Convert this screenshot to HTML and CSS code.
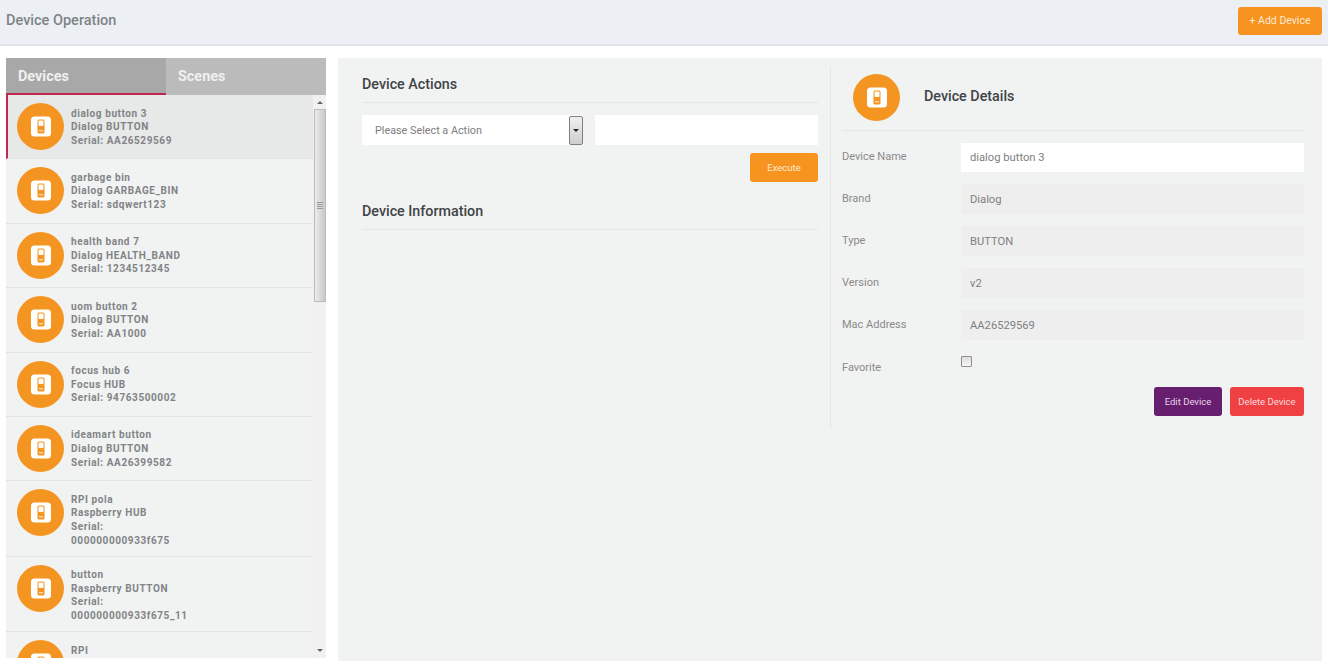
FILE: index.html
```html
<!DOCTYPE html>
<html lang="en">
<head>
    <meta charset="UTF-8">
    <title>Device Operation</title>
    <link rel="stylesheet" href="styles.css">
</head>
<body>
    <svg class="icon-defs" width="0" height="0">
        <symbol id="device-icon" viewBox="0 0 47 47">
            <circle cx="23.5" cy="23.5" r="23.5" fill="#f49521"/>
            <rect x="14" y="13.5" width="20" height="20" rx="3.5" fill="#fff"/>
            <rect x="20.5" y="16.5" width="7" height="14" rx="1.5" fill="#f49521"/>
            <rect x="21.5" y="17.6" width="5" height="5.4" rx="1" fill="#fff"/>
            <rect x="22" y="27" width="4" height="1.4" fill="#fbd9ae"/>
        </symbol>
    </svg>

    <header class="topbar">
        <h1>Device Operation</h1>
        <button class="btn btn-orange btn-add">+ Add Device</button>
    </header>

    <div class="page">
        <aside class="sidebar">
            <div class="tabs">
                <div class="tab tab-active">Devices</div>
                <div class="tab">Scenes</div>
            </div>
            <div class="list-wrap">
                <ul class="device-list">
                    <li class="device device-selected">
                        <svg class="device-icon"><use href="#device-icon"/></svg>
                        <div class="device-text">dialog button 3<br>Dialog BUTTON<br>Serial: AA26529569</div>
                    </li>
                    <li class="device">
                        <svg class="device-icon"><use href="#device-icon"/></svg>
                        <div class="device-text">garbage bin<br>Dialog GARBAGE_BIN<br>Serial: sdqwert123</div>
                    </li>
                    <li class="device">
                        <svg class="device-icon"><use href="#device-icon"/></svg>
                        <div class="device-text">health band 7<br>Dialog HEALTH_BAND<br>Serial: 1234512345</div>
                    </li>
                    <li class="device">
                        <svg class="device-icon"><use href="#device-icon"/></svg>
                        <div class="device-text">uom button 2<br>Dialog BUTTON<br>Serial: AA1000</div>
                    </li>
                    <li class="device">
                        <svg class="device-icon"><use href="#device-icon"/></svg>
                        <div class="device-text">focus hub 6<br>Focus HUB<br>Serial: 94763500002</div>
                    </li>
                    <li class="device">
                        <svg class="device-icon"><use href="#device-icon"/></svg>
                        <div class="device-text">ideamart button<br>Dialog BUTTON<br>Serial: AA26399582</div>
                    </li>
                    <li class="device device-tall">
                        <svg class="device-icon"><use href="#device-icon"/></svg>
                        <div class="device-text">RPI pola<br>Raspberry HUB<br>Serial:<br>000000000933f675</div>
                    </li>
                    <li class="device device-tall">
                        <svg class="device-icon"><use href="#device-icon"/></svg>
                        <div class="device-text">button<br>Raspberry BUTTON<br>Serial:<br>000000000933f675_11</div>
                    </li>
                    <li class="device device-tall">
                        <svg class="device-icon"><use href="#device-icon"/></svg>
                        <div class="device-text">RPI</div>
                    </li>
                </ul>
                <div class="scrollbar">
                    <div class="arrow-up"></div>
                    <div class="thumb"><div class="grip"></div></div>
                    <div class="track"></div>
                    <div class="arrow-down"></div>
                </div>
            </div>
        </aside>

        <main class="content">
            <section class="actions">
                <h2 class="section-title">Device Actions</h2>
                <div class="action-row">
                    <div class="select">
                        <span>Please Select a Action</span>
                        <div class="select-btn"></div>
                    </div>
                    <input class="action-input" type="text">
                </div>
                <div class="execute-row">
                    <button class="btn btn-orange btn-execute">Execute</button>
                </div>
                <h2 class="section-title">Device Information</h2>
            </section>

            <section class="details">
                <div class="details-head">
                    <svg class="details-icon"><use href="#device-icon"/></svg>
                    <h2>Device Details</h2>
                </div>
                <div class="field field-name">
                    <label>Device Name</label>
                    <div class="value value-edit">dialog button 3</div>
                </div>
                <div class="field">
                    <label>Brand</label>
                    <div class="value">Dialog</div>
                </div>
                <div class="field">
                    <label>Type</label>
                    <div class="value">BUTTON</div>
                </div>
                <div class="field">
                    <label>Version</label>
                    <div class="value">v2</div>
                </div>
                <div class="field">
                    <label>Mac Address</label>
                    <div class="value">AA26529569</div>
                </div>
                <div class="field field-check">
                    <label>Favorite</label>
                    <div class="checkbox"></div>
                </div>
                <div class="detail-buttons">
                    <button class="btn btn-purple">Edit Device</button>
                    <button class="btn btn-red">Delete Device</button>
                </div>
            </section>
        </main>
    </div>
</body>
</html>
```

FILE: styles.css
```css
* {
    box-sizing: border-box;
}
html, body {
    height: 661px;
    overflow: hidden;
}
body {
    margin: 0;
    background-color: #fff;
    font-family: Roboto, "Liberation Sans", sans-serif;
    color: #888;
}
.icon-defs {
    display: block;
    height: 0;
}
.topbar {
    height: 46px;
    display: flex;
    justify-content: space-between;
    align-items: center;
    padding: 0 6px 3px;
    background-color: #ecf0f5;
    border-bottom: 2px solid #e1e4e8;
}
.topbar h1 {
    margin: 0;
    font-size: 14.5px;
    font-weight: 500;
    color: #7f8385;
}
.btn {
    border: none;
    border-radius: 3px;
    color: #fde9d4;
    font-family: Roboto, "Liberation Sans", sans-serif;
    font-size: 9.5px;
    height: 29px;
    padding: 0;
}
.btn-orange {
    background-color: #f79420;
}
.btn-add {
    width: 84px;
    height: 28px;
    font-size: 10.5px;
}
.page {
    display: flex;
    align-items: flex-start;
    padding: 12px 7px 0 6px;
    gap: 12px;
}
.sidebar {
    width: 320px;
    flex: none;
}
.tabs {
    display: flex;
    height: 37px;
    background-color: #bbb;
}
.tab {
    width: 160px;
    padding: 10px 12px 0;
    font-size: 14.4px;
    font-weight: 700;
    color: #f0f0f0;
}
.tab-active {
    background-color: #a8a8a8;
    border-bottom: 2px solid #c0294f;
}
.list-wrap {
    display: flex;
    height: 563px;
    background-color: #f1f2f2;
}
.device-list {
    flex: 1;
    margin: 0;
    padding: 0;
    list-style: none;
    overflow: hidden;
}
.device {
    display: flex;
    height: 64.4px;
    padding: 8px 0 0 11px;
    border-bottom: 1px solid #e1e3e3;
}
.device-tall {
    height: 75.4px;
}
.device-selected {
    background-color: #e7e8e8;
    border-left: 2px solid #c0294f;
    padding-left: 9px;
}
.device-icon {
    width: 47px;
    height: 47px;
    flex: none;
}
.device-text {
    margin: 3.5px 0 0 7px;
    font-size: 10px;
    line-height: 13.6px;
    font-weight: 700;
    letter-spacing: 0.58px;
    color: #808486;
}
.scrollbar {
    width: 13px;
    flex: none;
    display: flex;
    flex-direction: column;
    align-items: center;
    background-color: #f1f1f1;
}
.arrow-up {
    margin: 6px 0 5px;
    border: 3px solid transparent;
    border-top: none;
    border-bottom: 3px solid #666;
}
.arrow-down {
    margin: 6px 0 6px;
    border: 3px solid transparent;
    border-bottom: none;
    border-top: 3px solid #666;
}
.thumb {
    width: 12px;
    height: 193px;
    flex: none;
    display: flex;
    align-items: center;
    justify-content: center;
    border: 1px solid #bcbcbc;
    background: linear-gradient(to right, #ececec, #c8c8c8);
}
.grip {
    width: 6px;
    height: 7px;
    background: repeating-linear-gradient(to bottom, #999 0, #999 1px, #ddd 1px, #ddd 2px);
}
.track {
    flex: 1;
}
.content {
    flex: 1;
    display: flex;
    align-items: flex-start;
    height: 603px;
    padding: 8px 18px 0 24px;
    background-color: #f1f2f2;
}
.actions {
    width: 456px;
    flex: none;
}
.section-title {
    margin: 6px 0 0;
    height: 31px;
    padding-top: 2px;
    font-size: 14.3px;
    font-weight: 500;
    line-height: 20px;
    color: #3f4447;
    border-bottom: 1px solid #e4e6e6;
}
.action-row {
    display: flex;
    justify-content: space-between;
    margin-top: 12px;
}
.select {
    width: 221px;
    height: 30px;
    display: flex;
    justify-content: space-between;
    align-items: center;
    padding-left: 13px;
    background-color: #fff;
    font-size: 10.8px;
    color: #7d7d7d;
}
.select-btn {
    width: 14px;
    height: 29px;
    border: 1px solid #808080;
    border-radius: 2px;
    background: linear-gradient(to bottom, #f0f0f0, #cfcfcf);
    position: relative;
}
.select-btn::after {
    content: "";
    position: absolute;
    left: 3px;
    top: 12px;
    border: 3px solid transparent;
    border-bottom: none;
    border-top: 3px solid #222;
}
.action-input {
    width: 223px;
    height: 30px;
    border: none;
    background-color: #fff;
}
.execute-row {
    display: flex;
    justify-content: flex-end;
    margin-top: 8px;
    margin-bottom: 17px;
}
.btn-execute {
    width: 68px;
}
.details {
    width: 474px;
    flex: none;
    height: 362px;
    margin: 0 0 0 12px;
    padding: 0 0 0 11px;
    border-left: 1px solid #e4e6e6;
}
.details-head {
    display: flex;
    align-items: flex-start;
    height: 65px;
    padding: 8px 0 0 11px;
    border-bottom: 1px solid #e4e6e6;
    margin-bottom: 12px;
}
.details-icon {
    width: 47px;
    height: 47px;
    flex: none;
}
.details-head h2 {
    margin: 12px 0 0 24px;
    font-size: 14.3px;
    line-height: 20px;
    font-weight: 500;
    color: #3f4447;
}
.field {
    display: flex;
    height: 42px;
}
.field label {
    width: 119px;
    flex: none;
    font-size: 11px;
    padding-top: 8px;
    color: #8a8a8a;
}
.field-name {
    height: 41px;
}
.field-name label {
    padding-top: 7px;
}
.value {
    width: 343px;
    height: 30px;
    padding: 0 9px;
    background-color: #eeeeee;
    font-size: 11.2px;
    line-height: 32px;
    color: #808080;
}
.value-edit {
    height: 29px;
    line-height: 29px;
    background-color: #fff;
}
.checkbox {
    width: 11px;
    height: 11px;
    margin-top: 4px;
    border: 1px solid #8f8f8f;
    border-radius: 1px;
    background: linear-gradient(to bottom, #dedede, #f5f5f5);
}
.field-check {
    height: 35px;
}
.field-check label {
    padding-top: 9px;
}
.detail-buttons {
    display: flex;
    justify-content: flex-end;
    gap: 8px;
}
.btn-purple {
    width: 68px;
    background-color: #681e6e;
    color: #e6d3e8;
}
.btn-red {
    width: 74px;
    background-color: #ef4144;
    color: #fdd9da;
}
```
